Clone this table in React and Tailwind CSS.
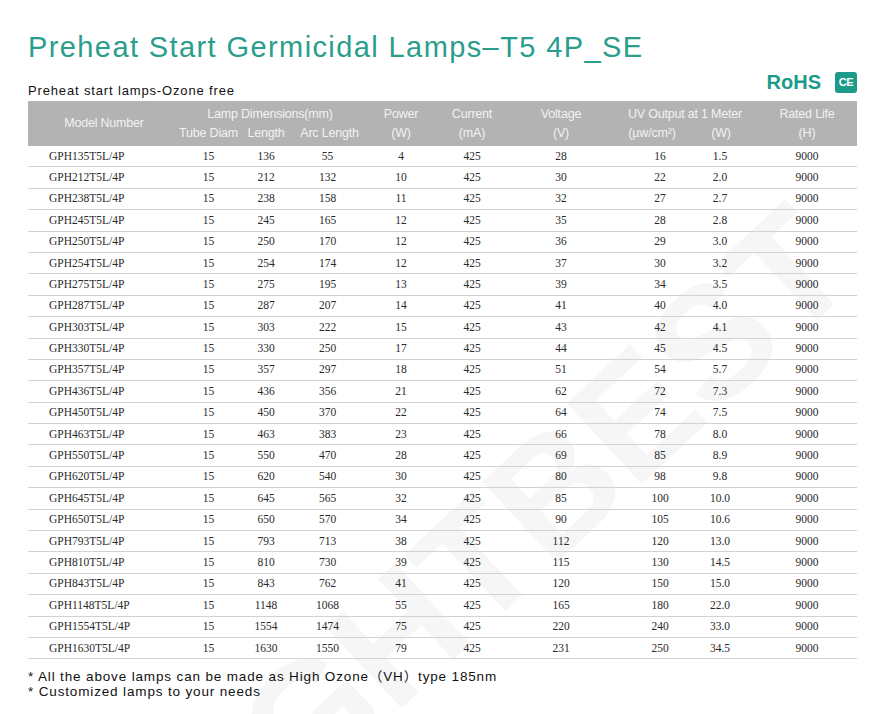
const rows = [
  ["GPH135T5L/4P", "15", "136", "55", "4", "425", "28", "16", "1.5", "9000"],
  ["GPH212T5L/4P", "15", "212", "132", "10", "425", "30", "22", "2.0", "9000"],
  ["GPH238T5L/4P", "15", "238", "158", "11", "425", "32", "27", "2.7", "9000"],
  ["GPH245T5L/4P", "15", "245", "165", "12", "425", "35", "28", "2.8", "9000"],
  ["GPH250T5L/4P", "15", "250", "170", "12", "425", "36", "29", "3.0", "9000"],
  ["GPH254T5L/4P", "15", "254", "174", "12", "425", "37", "30", "3.2", "9000"],
  ["GPH275T5L/4P", "15", "275", "195", "13", "425", "39", "34", "3.5", "9000"],
  ["GPH287T5L/4P", "15", "287", "207", "14", "425", "41", "40", "4.0", "9000"],
  ["GPH303T5L/4P", "15", "303", "222", "15", "425", "43", "42", "4.1", "9000"],
  ["GPH330T5L/4P", "15", "330", "250", "17", "425", "44", "45", "4.5", "9000"],
  ["GPH357T5L/4P", "15", "357", "297", "18", "425", "51", "54", "5.7", "9000"],
  ["GPH436T5L/4P", "15", "436", "356", "21", "425", "62", "72", "7.3", "9000"],
  ["GPH450T5L/4P", "15", "450", "370", "22", "425", "64", "74", "7.5", "9000"],
  ["GPH463T5L/4P", "15", "463", "383", "23", "425", "66", "78", "8.0", "9000"],
  ["GPH550T5L/4P", "15", "550", "470", "28", "425", "69", "85", "8.9", "9000"],
  ["GPH620T5L/4P", "15", "620", "540", "30", "425", "80", "98", "9.8", "9000"],
  ["GPH645T5L/4P", "15", "645", "565", "32", "425", "85", "100", "10.0", "9000"],
  ["GPH650T5L/4P", "15", "650", "570", "34", "425", "90", "105", "10.6", "9000"],
  ["GPH793T5L/4P", "15", "793", "713", "38", "425", "112", "120", "13.0", "9000"],
  ["GPH810T5L/4P", "15", "810", "730", "39", "425", "115", "130", "14.5", "9000"],
  ["GPH843T5L/4P", "15", "843", "762", "41", "425", "120", "150", "15.0", "9000"],
  ["GPH1148T5L/4P", "15", "1148", "1068", "55", "425", "165", "180", "22.0", "9000"],
  ["GPH1554T5L/4P", "15", "1554", "1474", "75", "425", "220", "240", "33.0", "9000"],
  ["GPH1630T5L/4P", "15", "1630", "1550", "79", "425", "231", "250", "34.5", "9000"],
];

// model | tube | length | arc | power | current | voltage | uv | W | life
const cols = "grid grid-cols-[152px_57px_58px_65px_82px_60px_118px_80px_40px_117px]";
const hcell = "flex justify-center whitespace-nowrap";

export default function App() {
  return (
    <div className="relative w-[879px] h-[714px] overflow-hidden bg-white font-['Liberation_Sans',Arial,sans-serif]">
      {/* faint watermark behind the table */}
      <div className="absolute left-[40px] top-[470px] w-[900px] -rotate-[43deg] text-[160px] font-bold leading-none text-[#f6f6f6] select-none pointer-events-none">
        LIGHTBEST
      </div>

      <div className="relative pl-[28px]">
        <h1 className="pt-[33px] text-[29px] leading-[29px] tracking-[1.4px] text-[#2a9d8c] font-normal">
          Preheat Start Germicidal Lamps–T5 4P_SE
        </h1>

        <div className="flex w-[829px] h-[39px] items-start">
          <p className="mt-[22px] text-[13px] leading-[13px] tracking-[0.85px] text-[#111]">
            Preheat start lamps-Ozone free
          </p>
          <div className="ml-auto mt-[10px] flex items-start gap-[14px]">
            <span className="text-[20px] leading-[20px] font-bold text-[#1c9a8a]">RoHS</span>
            <span className="flex h-[21px] w-[22px] items-center justify-center rounded-[3px] bg-[#1c9a8a] text-[11px] font-bold leading-none text-white tracking-[-0.5px]">
              CE
            </span>
          </div>
        </div>

        {/* header */}
        <div className={`${cols} w-[829px] h-[45px] py-[4px] grid-rows-[18.5px_18.5px] bg-[#b3b3b3] text-[12.5px] leading-[18.5px] tracking-[-0.2px] text-[#f2f2f2]`}>
          <div className="row-span-2 flex items-center justify-center whitespace-nowrap">Model Number</div>
          <div className={`col-span-3 ${hcell}`}>Lamp Dimensions(mm)</div>
          <div className={hcell}>Power</div>
          <div className={hcell}>Current</div>
          <div className={hcell}>Voltage</div>
          <div className={`col-span-2 pl-[10px] ${hcell}`}>UV Output at 1 Meter</div>
          <div className={`pl-[17px] ${hcell}`}>Rated Life</div>
          <div className={hcell}>Tube Diam</div>
          <div className={hcell}>Length</div>
          <div className={`pl-[4px] ${hcell}`}>Arc Length</div>
          <div className={hcell}>(W)</div>
          <div className={hcell}>(mA)</div>
          <div className={hcell}>(V)</div>
          <div className={`pr-[16px] ${hcell}`}>(µw/cm²)</div>
          <div className={`pl-[2px] ${hcell}`}>(W)</div>
          <div className={`pl-[17px] ${hcell}`}>(H)</div>
        </div>

        {/* body */}
        <div className="w-[829px] font-['Liberation_Serif','Times_New_Roman',serif] text-[11.5px] text-[#2a2a2a]">
          {rows.map((r) => (
            <div key={r[0]} className={`${cols} h-[21.4px] items-center border-b-[1.5px] border-[#d2d2d2] text-center`}>
              <div className="pl-[21px] text-left">{r[0]}</div>
              <div>{r[1]}</div>
              <div>{r[2]}</div>
              <div>{r[3]}</div>
              <div>{r[4]}</div>
              <div>{r[5]}</div>
              <div>{r[6]}</div>
              <div>{r[7]}</div>
              <div>{r[8]}</div>
              <div className="pl-[17px]">{r[9]}</div>
            </div>
          ))}
        </div>

        <div className="mt-[10px] text-[13.5px] leading-[15px] tracking-[0.85px] text-[#111] font-['Liberation_Sans','Noto_Sans_CJK_SC',sans-serif]">
          <p>* All the above lamps can be made as High Ozone（VH）type 185nm</p>
          <p>* Customized lamps to your needs</p>
        </div>
      </div>
    </div>
  );
}
